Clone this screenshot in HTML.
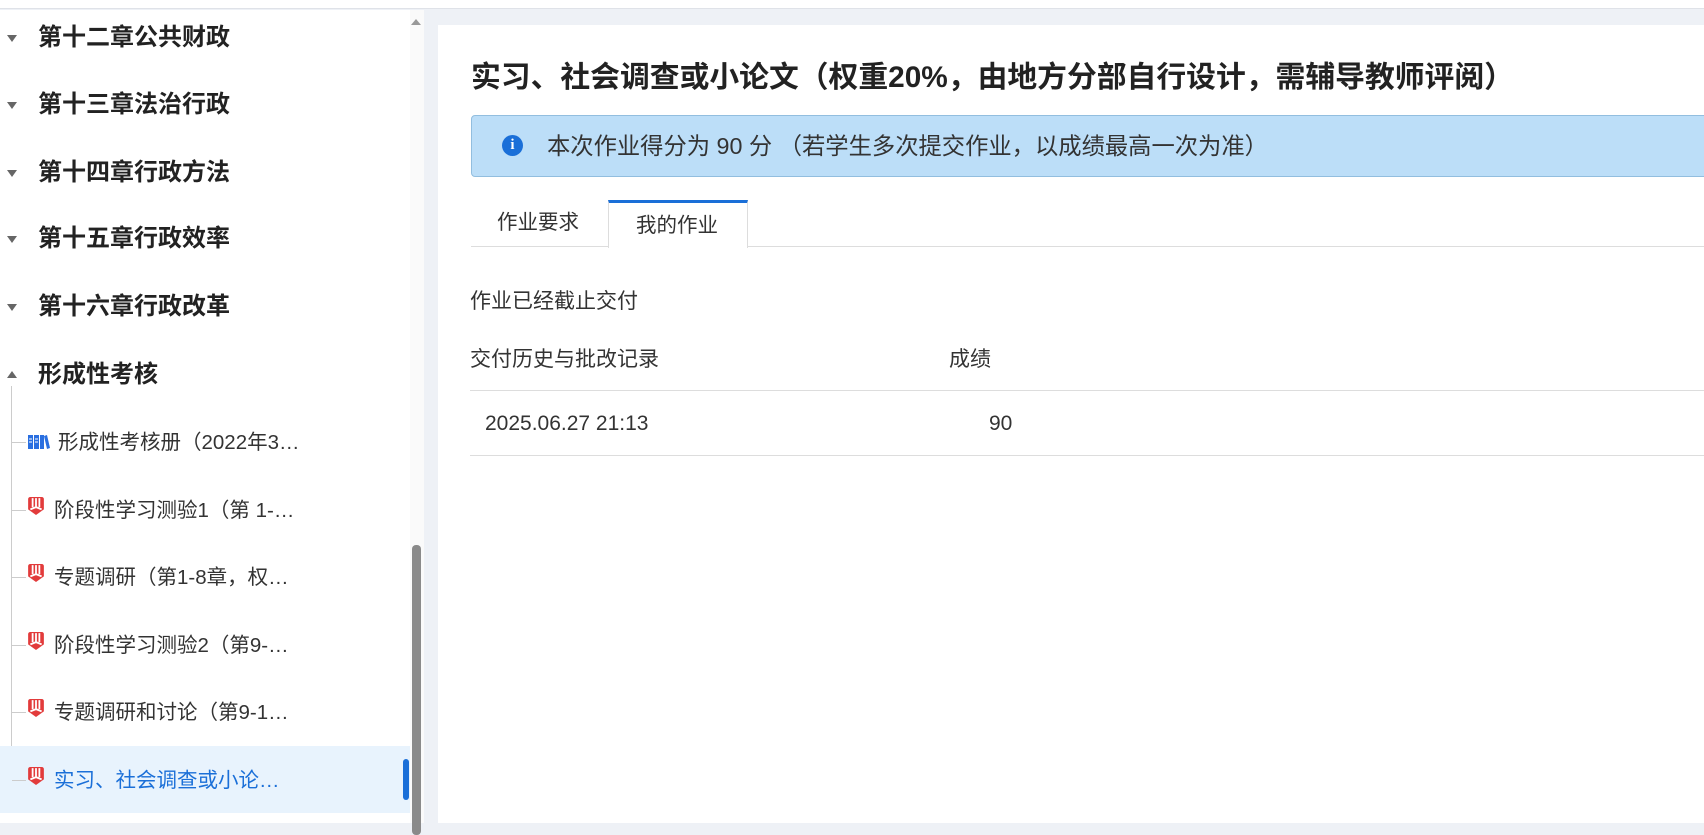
<!DOCTYPE html>
<html><head><meta charset="utf-8"><style>
*{margin:0;padding:0;box-sizing:border-box}
body{width:1704px;height:823px;overflow:hidden;background:#eef1f6;font-family:"Liberation Sans","Noto Sans CJK SC",sans-serif;position:relative;color:#333}
.top{position:absolute;left:0;top:0;width:1704px;height:9px;background:#fff;border-bottom:1px solid #dfe2e8}
.side{position:absolute;left:0;top:10px;width:410px;height:813px;background:#fff}
.sb{position:absolute;left:410px;top:10px;width:14px;height:813px;background:#fafafa}
.thumb{position:absolute;left:412px;top:545px;width:9px;height:290px;background:#8a8a8a;border-radius:4px}
.uparr{position:absolute;left:411px;top:19px;width:0;height:0;border-left:5px solid transparent;border-right:5px solid transparent;border-bottom:6px solid #999}
.ch{position:absolute;left:38px;font-size:24px;font-weight:bold;color:#222;line-height:30px}
.tri{position:absolute;left:7px;width:0;height:0;border-left:5px solid transparent;border-right:5px solid transparent}
.item{position:absolute;left:54px;font-size:20.5px;color:#333;line-height:26px;white-space:nowrap}
.hl{position:absolute;left:12px;width:14px;height:1px;background:#ccc}
.ic{position:absolute;left:28px;width:16px;height:18px}
.main{position:absolute;left:438px;top:25px;width:1266px;height:798px;background:#fff}
.t{position:absolute;font-size:21px;color:#333;line-height:26px;white-space:nowrap}
</style></head><body>
<div class="top"></div>
<div class="side"></div>
<div class="sb"></div><div class="uparr"></div><div class="thumb"></div>

<div class="tri" style="top:35px;border-top:7px solid #666"></div><div class="ch" style="top:23px">第十二章公共财政</div>
<div class="tri" style="top:102px;border-top:7px solid #666"></div><div class="ch" style="top:90px">第十三章法治行政</div>
<div class="tri" style="top:170px;border-top:7px solid #666"></div><div class="ch" style="top:158px">第十四章行政方法</div>
<div class="tri" style="top:236px;border-top:7px solid #666"></div><div class="ch" style="top:224px">第十五章行政效率</div>
<div class="tri" style="top:304px;border-top:7px solid #666"></div><div class="ch" style="top:292px">第十六章行政改革</div>
<div class="tri" style="top:371px;border-bottom:7px solid #666"></div><div class="ch" style="top:360px">形成性考核</div>

<div style="position:absolute;left:11px;top:386px;width:1px;height:390px;background:#ccc"></div>
<div style="position:absolute;left:0;top:746px;width:410px;height:67px;background:#e8f3fd"></div>
<div style="position:absolute;left:403px;top:759px;width:6px;height:41px;background:#1a6fd8;border-radius:3px"></div>

<div class="hl" style="top:442px"></div>
<svg class="ic" style="top:433px;width:22px" viewBox="0 0 22 16"><rect x="0" y="1" width="5" height="14" fill="#2a6fe0"/><rect x="6" y="1" width="5" height="14" fill="#2a6fe0"/><rect x="12" y="1" width="4" height="14" fill="#2a6fe0"/><path d="M16 2 L19 1 L22 14 L19 15Z" fill="#2a6fe0"/><path d="M1 5h3M1 8h3M7 5h3M7 8h3" stroke="#fff" stroke-width="1"/></svg>
<div class="item" style="top:430px;left:58px">形成性考核册（2022年3…</div>

<div class="hl" style="top:510px"></div>
<svg class="ic" style="top:497px" viewBox="0 0 14 16"><path d="M0 2 Q0 0 2 0 H12 Q14 0 14 2 V11 L7 16 L0 11Z" fill="#e23b3b"/><path d="M4 1v8M7 1v8M10 1v8M2 11 L7 9 L12 11" stroke="#fff" stroke-width="1.6" fill="none"/></svg>
<div class="item" style="top:498px">阶段性学习测验1（第 1-…</div>

<div class="hl" style="top:577px"></div>
<svg class="ic" style="top:564px" viewBox="0 0 14 16"><path d="M0 2 Q0 0 2 0 H12 Q14 0 14 2 V11 L7 16 L0 11Z" fill="#e23b3b"/><path d="M4 1v8M7 1v8M10 1v8M2 11 L7 9 L12 11" stroke="#fff" stroke-width="1.6" fill="none"/></svg>
<div class="item" style="top:565px">专题调研（第1-8章，权…</div>

<div class="hl" style="top:645px"></div>
<svg class="ic" style="top:632px" viewBox="0 0 14 16"><path d="M0 2 Q0 0 2 0 H12 Q14 0 14 2 V11 L7 16 L0 11Z" fill="#e23b3b"/><path d="M4 1v8M7 1v8M10 1v8M2 11 L7 9 L12 11" stroke="#fff" stroke-width="1.6" fill="none"/></svg>
<div class="item" style="top:633px">阶段性学习测验2（第9-…</div>

<div class="hl" style="top:712px"></div>
<svg class="ic" style="top:699px" viewBox="0 0 14 16"><path d="M0 2 Q0 0 2 0 H12 Q14 0 14 2 V11 L7 16 L0 11Z" fill="#e23b3b"/><path d="M4 1v8M7 1v8M10 1v8M2 11 L7 9 L12 11" stroke="#fff" stroke-width="1.6" fill="none"/></svg>
<div class="item" style="top:700px">专题调研和讨论（第9-1…</div>

<div class="hl" style="top:780px"></div>
<svg class="ic" style="top:767px" viewBox="0 0 14 16"><path d="M0 2 Q0 0 2 0 H12 Q14 0 14 2 V11 L7 16 L0 11Z" fill="#e23b3b"/><path d="M4 1v8M7 1v8M10 1v8M2 11 L7 9 L12 11" stroke="#fff" stroke-width="1.6" fill="none"/></svg>
<div class="item" style="top:768px;color:#1a6fd8">实习、社会调查或小论…</div>

<div class="main"></div>
<div style="position:absolute;left:471px;top:60px;font-size:29.8px;font-weight:bold;color:#222;line-height:36px;white-space:nowrap">实习、社会调查或小论文（权重20%，由地方分部自行设计，需辅导教师评阅）</div>
<div style="position:absolute;left:471px;top:115px;width:1240px;height:62px;background:#bcdef8;border:1px solid #92bedf;border-radius:4px"></div>
<div style="position:absolute;left:502px;top:135px;width:21px;height:21px;border-radius:50%;background:#1a6fd8;color:#fff;font-size:15px;font-weight:bold;text-align:center;line-height:21px;font-family:'Liberation Serif',serif">i</div>
<div style="position:absolute;left:547px;top:131px;font-size:23.3px;color:#333;line-height:30px;white-space:nowrap">本次作业得分为 90 分 （若学生多次提交作业，以成绩最高一次为准）</div>

<div style="position:absolute;left:471px;top:246px;width:1233px;height:1px;background:#ddd"></div>
<div style="position:absolute;left:608px;top:200px;width:140px;height:48px;background:#fff;border:1px solid #ddd;border-top:3px solid #1a6fd8;border-bottom:none"></div>
<div class="t" style="left:497px;top:210px;font-size:20.5px">作业要求</div>
<div class="t" style="left:636px;top:213px;font-size:20.5px">我的作业</div>

<div class="t" style="left:470px;top:289px">作业已经截止交付</div>
<div class="t" style="left:470px;top:347px">交付历史与批改记录</div>
<div class="t" style="left:949px;top:347px">成绩</div>
<div style="position:absolute;left:470px;top:390px;width:1234px;height:1px;background:#ddd"></div>
<div class="t" style="left:485px;top:411px">2025.06.27 21:13</div>
<div class="t" style="left:989px;top:411px">90</div>
<div style="position:absolute;left:470px;top:455px;width:1234px;height:1px;background:#ddd"></div>
</body></html>
